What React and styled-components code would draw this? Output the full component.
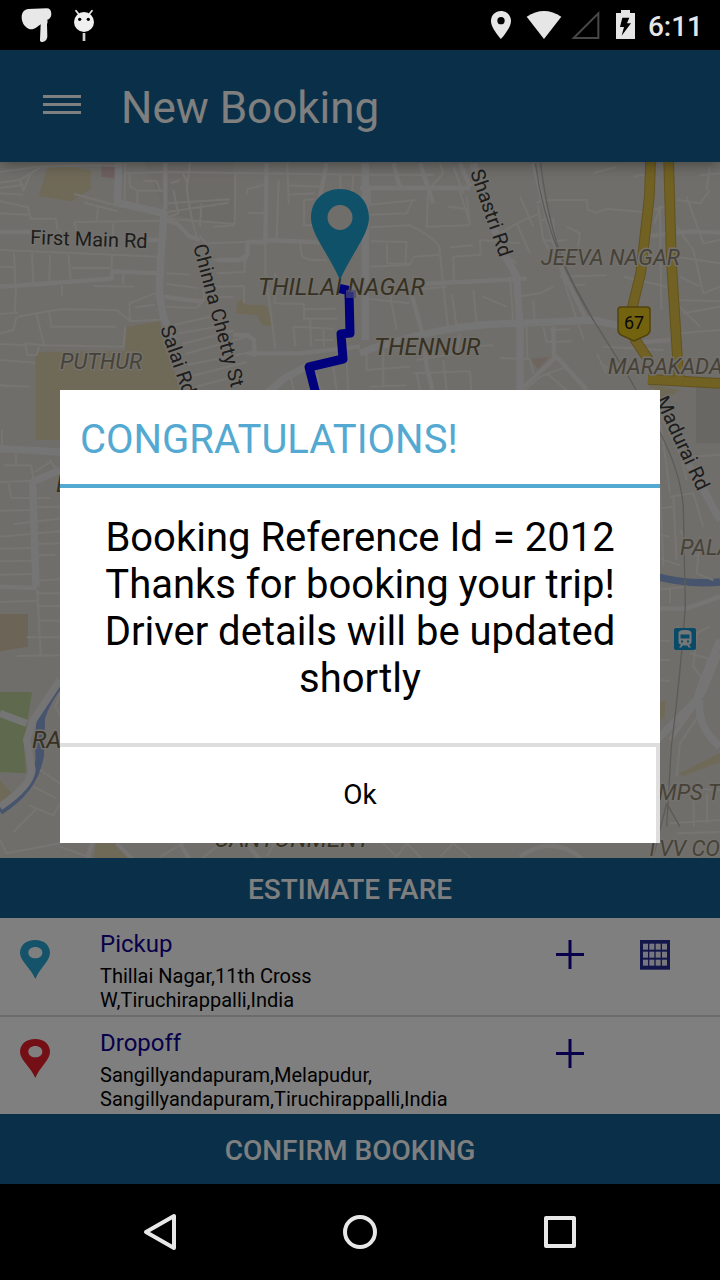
import React from "react";
import styled, { createGlobalStyle } from 'styled-components'

const GlobalStyle = createGlobalStyle`
* {
box-sizing: border-box;
}
body {
margin: 0;
background: #000000;
font-family: Roboto, "Liberation Sans", sans-serif;
}
button {
font-family: inherit;
border: none;
padding: 0;
background: none;
cursor: pointer;
}
svg {
display: block;
}
`

const StyledPhone = styled.div`
display: flex;
flex-direction: column;
min-height: 100vh;
`

const StyledStatusBar = styled.div`
display: flex;
align-items: center;
justify-content: space-between;
height: 50px;
padding: 0 17px 0 20px;
background: #000000;
`

const StyledStatusGroup = styled.div`
display: flex;
align-items: center;
gap: ${props => props.$gap};
`

const StyledClock = styled.time`
padding-top: 4px;
color: #e6e6e6;
font-size: 28px;
font-weight: 500;
line-height: 32px;
`

const StyledScreen = styled.div`
position: relative;
display: flex;
flex: 1;
flex-direction: column;
`

const StyledHeader = styled.header`
position: relative;
z-index: 1;
display: flex;
align-items: center;
gap: 40px;
height: 112px;
padding: 0 43px;
background: #145f91;
box-shadow: 0 2px 14px rgba(0,0,0,0.4);
`

const StyledTitle = styled.h1`
margin: 0;
padding-top: 4px;
color: #ffffff;
font-size: 44px;
font-weight: 400;
line-height: 52px;
`

const StyledMap = styled.section`
position: relative;
flex: 1;
min-height: 400px;
background: #e0dcd4;
overflow: hidden;
`

const StyledMapSvg = styled.svg`
position: absolute;
inset: 0;
width: 100%;
height: 100%;
`

const StyledBarButton = styled.button`
height: ${props => props.$height};
padding: 4px 20px 0 0;
background: #145f91;
color: #ffffff;
font-size: 28px;
font-weight: 500;
line-height: 32px;
`

const StyledRow = styled.div`
display: grid;
grid-template-columns: 80px 1fr 85px 80px;
padding: 12px 0 3px 20px;
background: #ffffff;

& + & {
border-top: 2px solid #d6d6d6;
}
`

const StyledRowIcon = styled.div`
padding-top: 10px;
`

const StyledRowButton = styled.button`
align-self: start;
justify-self: start;
margin-top: 10px;
`

const StyledRowLabel = styled.h2`
margin: 0 0 6px;
color: #0f0096;
font-size: 24px;
font-weight: 400;
line-height: 28px;
`

const StyledAddress = styled.p`
margin: 0;
color: #000000;
font-size: 20px;
line-height: 24px;
`

const StyledScrim = styled.div`
position: absolute;
inset: 0;
z-index: 2;
display: flex;
align-items: center;
justify-content: center;
padding: 0 60px 2px;
background: rgba(0,0,0,0.5);
`

const StyledDialog = styled.div`
display: flex;
flex: 1;
flex-direction: column;
background: #ffffff;
`

const StyledDialogTitle = styled.h2`
margin: 0;
padding: 26px 20px 21px;
border-bottom: 4px solid #53a9d1;
color: #53a9d1;
font-size: 40px;
font-weight: 400;
line-height: 47px;
`

const StyledDialogText = styled.p`
margin: 0;
padding: 26px 20px 41px;
color: #000000;
font-size: 40px;
line-height: 47px;
text-align: center;
`

const StyledOkButton = styled.button`
height: 100px;
padding-left: 4px;
border-top: 4px solid #dedede;
border-right: 4px solid #dedede;
color: #000000;
font-size: 28px;
line-height: 32px;
`

const StyledNav = styled.nav`
display: flex;
height: 96px;
padding: 0 60px;
background: #000000;
`

const StyledNavButton = styled.button`
display: flex;
flex: 1;
align-items: center;
justify-content: center;
`

const StyledLabel = styled.text`
font-family: Roboto, "Liberation Sans", sans-serif;
font-size: ${props => props.$area ? (props.$strong ? '24px' : '22px') : '20px'};
font-style: ${props => props.$area ? 'italic' : 'normal'};
fill: ${props => props.$area ? (props.$strong ? '#6e6244' : '#8f8570') : '#3a3a3a'};
stroke: #e6e2da;
stroke-width: 3px;
stroke-linejoin: round;
paint-order: stroke;
`

const StyledShieldText = styled.text`
font-family: Roboto, "Liberation Sans", sans-serif;
font-size: 18px;
fill: #111111;
text-anchor: middle;
`

// map geometry is kept at three units per pixel
const PARKS = [
    { fill: '#dfd2b0', d: 'M140 30L160 14L272 30L272 86L215 124L116 108Z' },
    { fill: '#dcbfc0', d: 'M304 14L346 14L346 56L304 50Z' },
    { fill: '#dfd2b0', d: 'M380 500L478 484L540 690L540 840L106 840L106 576L376 572Z' },
    { fill: '#dfd2b0', d: 'M712 424L734 420L736 434L800 436L820 500L786 494L770 466L708 460Z' },
    { fill: '#dccabf', d: 'M1590 596L1648 590L1614 628Z' },
    { fill: '#d9c8ae', d: 'M0 1362L84 1362L84 1460L0 1474Z' },
    { fill: '#bcd39a', d: 'M0 1596L96 1596L72 1750L78 1840L0 1836Z' },
    { fill: '#dfd2b0', d: 'M0 1860L44 1910L0 1940Z' },
    { fill: '#dfd2b0', d: 'M2034 1842L2160 1780L2160 1806L2050 1848Z' },
    { fill: '#dfd2b0', d: 'M1950 1640L1996 1620L1994 1672L1960 1700Z' },
    { fill: '#dfd2b0', d: 'M288 2050L350 2050L386 2100L280 2100Z' },
    { fill: '#d1cfc9', d: 'M2088 672L2160 676L2160 850L2088 850Z' },
    { fill: '#dfd2b0', d: 'M1950 672L2040 690L1980 730L1950 690Z' },
    { fill: '#dbd6cf', d: 'M430 0L700 0L705 200L500 160Z' },
]

const MINOR_ROADS = [
    'M0 36L110 20L290 16L350 18',
    'M0 68L60 60L120 22',
    'M0 100L70 104M92 40L70 92L60 60M0 84L70 74',
    'M0 124L84 142L92 176L168 176L172 210M0 160L88 164',
    'M222 102L364 140M252 128L352 154M294 140L290 186',
    'M222 186L484 182M222 186L230 214M340 190L338 270M180 210L184 244',
    'M376 10L374 120M376 40L500 36L1080 44M388 42L390 80L412 92L412 130',
    'M430 62L470 64L480 90M412 92L490 92',
    'M570 10L560 90L576 180L590 230M548 40L562 66M512 70L540 60',
    'M504 130L690 118M504 156L686 128M504 176L704 192L706 44',
    'M604 130L600 200M520 90L535 160L504 172',
    'M640 200L704 196M742 88L790 74M742 88L742 104M742 158L794 160',
    'M862 10L866 130M836 60L830 240M862 76L960 80M862 104L944 100',
    'M912 120L912 196L948 196M912 120L944 118M1020 40L1022 90M1060 46L1056 100',
    'M0 270L340 284L476 290M96 280L100 370M42 280L46 370M150 284L148 368',
    'M206 284L212 358M216 324L330 324M0 320L46 322M336 284L334 360M370 340L370 372',
    'M186 378L186 406M48 380L44 460M280 378L404 380M0 462L54 458',
    'M54 470L110 460L180 448L350 450L392 484L500 478',
    'M148 458L154 500L350 500M110 462L116 490L134 560M390 486L388 430L466 400',
    'M0 520L40 510L50 470M404 442L466 434M376 500L370 560L130 556L76 550L82 586L110 584L118 560',
    'M0 600L106 608M0 552L80 556M0 676L40 680',
    'M640 300L740 300M650 340L734 336M734 300L734 340M600 230L618 250L740 246',
    'M500 340L570 344M500 372L592 384M500 440L590 444L612 420L610 380',
    'M650 380L732 378L732 430M700 410L640 412M536 520L680 496M546 552L700 512',
    'M556 582L740 530M564 614L744 578M576 648L740 606M590 680L700 650M500 500L640 468',
    'M740 250L740 300M796 240L796 340L810 440L826 566M826 340L824 430L912 432',
    'M900 250L906 290L930 300L980 300M912 430L912 476L1012 476M912 448L1010 446',
    'M880 500L886 560M930 478L934 560M880 500L1000 506M970 510L972 560M944 540L1000 540',
    'M880 690L870 640M960 690L950 640M1010 690L1000 620M1040 600L1044 690',
    'M1080 44L1300 44M1108 76L1110 130M1108 134L1250 120M1110 164L1220 160L1236 126',
    'M1110 202L1230 196Q1300 230 1318 260L1334 420L1344 500',
    'M1284 100L1280 200L1410 196M1344 140L1404 148M1320 10L1330 40L1284 90',
    'M1410 196L1400 110M1360 20L1390 100M1450 40L1420 70L1380 96L1410 190',
    'M1112 244L1220 246L1216 310M1160 250L1162 310L1230 312M1110 320L1230 314L1242 290L1320 284',
    'M1130 400L1340 380M1166 380L1190 510M1100 416L1230 430M1350 262L1420 256',
    'M1356 402L1370 500M1420 390L1430 490M1440 240L1560 250M1440 240L1442 284L1360 290L1362 370',
    'M1500 220L1550 190L1620 160M1550 190L1590 280M1470 190L1500 270L1550 310M1560 110L1600 200',
    'M1530 350L1540 490M1550 410L1620 400L1660 380M1600 420L1604 480M1450 410L1520 440',
    'M1610 130Q1614 120 1650 120L1760 120L1764 150L1790 158L1820 146L1930 156',
    'M1614 136L1630 240L1664 244L1700 240M1626 180L1660 176L1664 240M1700 200L1740 220L1734 260',
    'M1630 240L1680 320L1700 390L1752 540M1680 350L1820 346M1700 376L1756 374',
    'M1780 40L1850 20M1900 50L1940 42M1964 190L1980 140L1984 450M1960 150L2020 130',
    'M1870 350L2000 380M2030 120L2100 130L2130 90M2060 110L2110 250L2160 240',
    'M2030 200L2080 270L2110 400L2160 380M2030 290L2160 310M2030 420L2160 424M2040 440L2100 500',
    'M2040 520L2160 510M2050 460L2160 440M2040 350L2100 380M2130 20L2120 90M2160 40L2100 46',
    'M1630 500L1640 546L1716 544M1710 508L1650 510M1580 500L1582 600M1660 500L1662 600',
    'M1500 594L1590 598M1590 598L1600 640M1576 690L1620 650L1700 620L1760 690M1640 640L1700 690',
    'M1100 560L1100 630L1230 620M1150 560L1150 680M1110 680L1220 676M1240 640L1410 634L1414 690',
    'M1250 640L1260 690M1330 600L1340 690M1380 520L1370 580L1250 600M1400 560L1480 556',
    'M1810 560L1990 570M1820 640L1790 580M1800 610L1850 640',
    'M0 676L90 680M6 810L6 860M48 882L48 912M10 916L94 916L100 960M0 966L98 962',
    'M26 970L34 1014L150 1014M104 1042L180 1040M40 1092L180 1076M0 1052L96 1050M0 1130L180 1114',
    'M0 1166L98 1164M0 1204L98 1202M0 1244L98 1242M110 1152L180 1150M110 1186L166 1184',
    'M110 1262L180 1258M0 1326L110 1322M110 1300L180 1300M110 1338L180 1338M112 1290L122 1484M80 1432L180 1432M50 1488L180 1486M118 1382L180 1382',
    'M104 936L150 906M150 900L176 940M180 1600L166 1640L184 1670',
    'M120 1830L180 1870M100 1880L170 1916M86 1936L160 1966L180 1930M40 2016L110 1946',
    'M0 2040L20 2080L180 2050L260 2030M180 2060L290 2100M480 2090L550 2050M600 2100L650 2060',
    'M800 2090L830 2040M1140 2040L1190 2090L1220 2050L1270 2100M1320 2090L1360 2050L1420 2100',
    'M1980 780L2000 920L2010 1000M2010 760L2060 960M2070 890L2160 884M2010 1010L2080 1000L2110 1100',
    'M1980 980L1990 1220M1950 1050L2020 1040M1950 1120L2010 1130M2020 1010L2030 1200M2040 1110L2090 1190M1960 1190L2040 1216',
    'M2100 1130L2090 1240L2140 1260M2010 1280L2010 1330M1970 1290L2060 1280M2030 1400L2070 1430L2130 1400',
    'M2070 1480L2140 1500M1950 1440L2010 1444M1950 1500L2010 1500M1960 1560L2010 1562M2090 1420L2080 1520L2110 1560',
    'M2100 1660L2040 1750L2030 1850M1960 1880L2160 1890M2010 1990L2160 1980M2030 2020L2160 2016M2080 1890L2082 2000M2120 1900L2122 1990',
]

const MEDIUM_ROADS = [
    'M0 216L90 216M430 240L480 240',
    'M0 380L120 372L334 356L338 334L480 340',
    'M496 10L496 150',
    'M494 180L530 190L570 230L600 240',
    'M800 10L796 240L1080 252M980 10L960 110',
    'M650 300L720 300L742 284L744 246L800 246',
    'M490 410L560 420L610 424',
    'M700 524L744 526L762 540L764 590M740 580L900 580L1080 560',
    'M1080 84L1410 84M1180 10L1200 84M1260 10L1300 130M1380 10L1410 80',
    'M1260 372L1580 356M1234 400L1270 530L1280 620L1300 700',
    'M1600 10L1640 170L1690 340L1760 480',
    'M1930 230L2070 214L2160 218M1930 546L2010 540',
    'M1560 690L1670 590L1760 690M1660 500L1662 590',
    'M0 1280L110 1284M1950 1346L2060 1346L2160 1310',
    'M2010 1740L2110 1600L2160 1480',
    'M540 2050L570 2100M740 2050L780 2100M1560 2090Q1660 2020 1750 2100M260 2100L280 2040M350 2050L400 2100',
]

const MAJOR_ROADS = [
    'M356 10L352 128L492 160L482 300L478 400L490 470L520 540',
    'M1096 10L1096 540M800 700L860 650L920 620',
    'M1080 580L1130 560L1240 530Q1400 490 1560 490L1780 480L1870 500',
    'M1420 10L1500 260L1550 350L1560 500L1560 700',
    'M0 866L180 876M180 930L98 966L108 1280',
    'M0 1660L80 1690M180 1560L100 1680L80 1740L96 1830Q90 1880 0 1940',
    'M2100 970L2160 1080M1950 1760L2090 1620L2110 1560L2160 1440M2100 1620Q2090 1700 2160 1760',
    'M1950 690L2100 980',
]

const WATER = [
    'M186 1566Q140 1620 122 1680L118 1800Q100 1890 0 1954',
    'M1950 1244Q2060 1276 2160 1266',
]

const RAILS = [
    'M1606 10Q1640 260 1780 480L1880 640L1960 780Q2040 920 2050 1040L2056 1340Q2040 1560 2014 1760L2000 2000',
    'M1622 10Q1650 240 1720 370L1780 480',
    'M2000 1930L1960 2090M2000 1930L2040 2000',
]

const HIGHWAYS = [
    'M1952 0L1948 110L1922 340L1890 470L1906 540L1946 600',
    'M2006 0L2014 300L2034 620L2040 670',
    'M1944 658L2160 670',
]

const LABELS = [
    { text: 'First Main Rd', x: 30, y: 82, turn: 2 },
    { text: 'Chinna Chetty St', x: 193, y: 84, turn: 75 },
    { text: 'Salai Rd', x: 160, y: 166, turn: 71 },
    { text: 'Shastri Rd', x: 470, y: 10, turn: 71 },
    { text: 'Madurai Rd', x: 655, y: 238, turn: 65 },
    { text: 'PUTHUR', x: 60, y: 207, area: true },
    { text: 'THILLAI NAGAR', x: 258, y: 133, area: true, strong: true },
    { text: 'THENNUR', x: 374, y: 193, area: true, strong: true },
    { text: 'JEEVA NAGAR', x: 541, y: 103, area: true },
    { text: 'MARAKADA', x: 608, y: 212, area: true },
    { text: 'PALA', x: 680, y: 393, area: true },
    { text: 'E', x: 56, y: 330, area: true, strong: true },
    { text: 'RA', x: 32, y: 586, area: true, strong: true },
    { text: 'MPS TO', x: 658, y: 638, area: true },
    { text: 'CANTONMENT', x: 214, y: 685, area: true, strong: true },
    { text: 'TVV CO', x: 646, y: 694, area: true },
]

const PLACES = [
    {
        label: 'Pickup',
        colour: '#28a6d4',
        lines: ['Thillai Nagar,11th Cross', 'W,Tiruchirappalli,India'],
        calendar: true,
    },
    {
        label: 'Dropoff',
        colour: '#e8202a',
        lines: ['Sangillyandapuram,Melapudur,', 'Sangillyandapuram,Tiruchirappalli,India'],
    },
]

function Roads({paths, colour, width}){
    return(
        <g fill="none" stroke={colour} strokeWidth={width} strokeLinejoin="round">
            {paths.map(d => <path key={d} d={d} />)}
        </g>
    )
}

function CityMap(){
    return(
        <StyledMapSvg viewBox="0 0 720 696" preserveAspectRatio="xMidYMid slice" role="img" aria-label="Map of the trip">
            <g transform="translate(0 -2) scale(0.33333)">
                {PARKS.map(park => <path key={park.d} d={park.d} fill={park.fill} />)}
                <Roads paths={WATER} colour="#8fa9dc" width={22} />
                <path d="M112 1660L136 1640L132 1790L110 1850L104 1740Z" fill="#8fa9dc" />
                <Roads paths={MINOR_ROADS} colour="#edeae5" width={6} />
                <Roads paths={MEDIUM_ROADS} colour="#eceae7" width={13} />
                <Roads paths={MAJOR_ROADS} colour="#eceaeb" width={22} />
                <Roads paths={RAILS} colour="#b9b6b1" width={4} />
                <Roads paths={HIGHWAYS} colour="#c4a540" width={32} />
                <Roads paths={HIGHWAYS} colour="#e2c247" width={26} />
            </g>
            {LABELS.map(label => (
                <StyledLabel
                    key={label.text}
                    x={label.x}
                    y={label.y}
                    $area={label.area}
                    $strong={label.strong}
                    transform={label.turn ? `rotate(${label.turn} ${label.x} ${label.y})` : undefined}
                >
                    {label.text}
                </StyledLabel>
            ))}
            <path d="M621 145h26q3 0 3 3v20q0 3-3 5l-13 6l-13-6q-3-2-3-5v-20q0-3 3-3z" fill="#e6c71e" stroke="#a3861f" strokeWidth="1.5" />
            <StyledShieldText x="634" y="167">67</StyledShieldText>
            <rect x="674" y="466" width="22" height="22" rx="2" fill="#0e96d0" />
            <path fillRule="evenodd" fill="#eeeeee" d="M685 468c5 0 6.500 1 6.500 4v7.500c0 2-1 3-2.500 3l2 3h-2.500l-1-2h-5l-1 2h-2.500l2-3c-1.500 0-2.500-1-2.500-3V472c0-3 1.500-4 6.500-4zM680.500 472.500v4h9v-4zM681 478.500v2h2v-2zM687 478.500v2h2v-2z" />
            <path d="M345 123l-2 9M349 130L350 171L341 172L343 197L309 205L318 240L330 280" fill="none" stroke="#0000ff" strokeWidth="9" strokeLinejoin="round" />
            <path d="M346 128h10v8h-10z" fill="#8f8cf0" opacity="0.7" />
            <path fillRule="evenodd" fill="#20a2d4" d="M340 27C323 27 311 39 311 56C311 72 328 91 340 118C352 91 369 72 369 56C369 39 357 27 340 27ZM340 43a12.500 12.500 0 1 1 0 25a12.500 12.500 0 1 1 0-25z" />
        </StyledMapSvg>
    )
}

function PlacePin({colour}){
    return(
        <svg width="30" height="40" viewBox="0 0 90 120" aria-hidden="true">
            <path fill={colour} fillRule="evenodd" d="M46 0C18 0 0 16 0 39C0 62 32 84 46 117C60 84 90 62 90 39C90 16 72 0 46 0ZM46 21c12 0 21 7 21 17s-9 17-21 17s-21-7-21-17s9-17 21-17z" />
        </svg>
    )
}

function CalendarGrid(){
    const cols = [9, 28, 47, 66]
    const rows = [11, 35, 59]
    return(
        <svg width="30" height="30" viewBox="0 0 90 90" aria-hidden="true">
            <rect width="90" height="89" fill="#252c94" />
            {rows.map(y => cols.map(x => <rect key={`${x}-${y}`} x={x} y={y} width="15" height="18" fill="#eeeefa" />))}
        </svg>
    )
}

function StatusBar(){
    return(
        <StyledStatusBar>
            <StyledStatusGroup $gap="21px">
                <svg width="32" height="36" viewBox="60 20 96 108" fill="#e8e8e8">
                    <path d="M84 26L140 24Q153 24 154 40Q154 54 142 58Q144 64 141 72L142 108Q142 122 128 125Q119 125 120 118L122 72Q108 84 98 87Q84 88 74 76Q64 64 65 46Q68 28 84 26Z" />
                </svg>
                <svg width="22" height="33" viewBox="219 27 66 99">
                    <circle cx="252" cy="66" r="30" fill="#f0f0f0" />
                    <path d="M228 32L236 42M276 32L268 42" stroke="#f0f0f0" strokeWidth="5" strokeLinecap="round" />
                    <path d="M252 99V123" stroke="#d5d5d5" strokeWidth="8" />
                    <circle cx="239" cy="58" r="5" />
                    <circle cx="265" cy="58" r="5" />
                </svg>
            </StyledStatusGroup>
            <StyledStatusGroup $gap="8px">
                <svg width="26" height="30" viewBox="384 30 78 90" fill="#e6e6e6">
                    <path fillRule="evenodd" d="M423 33C406 33 393 46 393 63C393 85 423 117 423 117S453 85 453 63C453 46 440 33 423 33ZM423 51a11 11 0 1 1 0 22a11 11 0 1 1 0-22z" />
                </svg>
                <svg width="40" height="30" viewBox="486 30 120 90" fill="#e6e6e6">
                    <path d="M500 50Q552 16 604 50L552 117Z" />
                </svg>
                <svg width="32" height="30" viewBox="630 30 96 90" fill="none" stroke="#484848" strokeWidth="6">
                    <path d="M641 114L715 40V114Z" />
                </svg>
                <svg width="30" height="30" viewBox="750 30 90 90">
                    <path fill="#e6e6e6" d="M768 39H783V30H810V39H825V117H768Z" />
                    <path fill="#000000" d="M787 53H808L801 70H813L785 107L792 81H780Z" />
                </svg>
                <StyledClock>6:11</StyledClock>
            </StyledStatusGroup>
        </StyledStatusBar>
    )
}

function PlaceRow({place}){
    return(
        <StyledRow>
            <StyledRowIcon>
                <PlacePin colour={place.colour} />
            </StyledRowIcon>
            <div>
                <StyledRowLabel>{place.label}</StyledRowLabel>
                <StyledAddress>{place.lines[0]}<br />{place.lines[1]}</StyledAddress>
            </div>
            <StyledRowButton type="button" aria-label={`Add ${place.label}`}>
                <svg width="30" height="30" viewBox="0 0 30 30" stroke="#0f0096" strokeWidth="3">
                    <path d="M1 14.500H29M15 0V29" />
                </svg>
            </StyledRowButton>
            {place.calendar && (
                <StyledRowButton type="button" aria-label="Pick a date">
                    <CalendarGrid />
                </StyledRowButton>
            )}
        </StyledRow>
    )
}

export default function App(){
    return(
        <StyledPhone>
            <GlobalStyle />
            <StatusBar />
            <StyledScreen>
                <StyledHeader>
                    <button type="button" aria-label="Menu">
                        <svg width="38" height="24" viewBox="0 0 38 24" stroke="#ffffff" strokeWidth="3">
                            <path d="M0 2.500H38M0 10.500H38M0 18.500H38" />
                        </svg>
                    </button>
                    <StyledTitle>New Booking</StyledTitle>
                </StyledHeader>
                <StyledMap>
                    <CityMap />
                </StyledMap>
                <StyledBarButton type="button" $height="60px">ESTIMATE FARE</StyledBarButton>
                {PLACES.map(place => <PlaceRow key={place.label} place={place} />)}
                <StyledBarButton type="button" $height="70px">CONFIRM BOOKING</StyledBarButton>
                <StyledScrim>
                    <StyledDialog role="dialog" aria-labelledby="dialog-title">
                        <StyledDialogTitle id="dialog-title">CONGRATULATIONS!</StyledDialogTitle>
                        <StyledDialogText>
                            Booking Reference Id = 2012<br />
                            Thanks for booking your trip! Driver details will be updated shortly
                        </StyledDialogText>
                        <StyledOkButton type="button">Ok</StyledOkButton>
                    </StyledDialog>
                </StyledScrim>
            </StyledScreen>
            <StyledNav>
                <StyledNavButton type="button" aria-label="Back">
                    <svg width="36" height="40" viewBox="0 0 36 40" fill="none" stroke="#e8e8e8" strokeWidth="4" strokeLinejoin="round">
                        <path d="M32 4V36L4 20Z" />
                    </svg>
                </StyledNavButton>
                <StyledNavButton type="button" aria-label="Home">
                    <svg width="36" height="36" viewBox="0 0 36 36" fill="none" stroke="#e8e8e8" strokeWidth="4">
                        <circle cx="18" cy="18" r="15" />
                    </svg>
                </StyledNavButton>
                <StyledNavButton type="button" aria-label="Recent apps">
                    <svg width="32" height="32" viewBox="0 0 32 32" fill="none" stroke="#e8e8e8" strokeWidth="4" strokeLinejoin="round">
                        <rect x="2" y="2" width="28" height="28" />
                    </svg>
                </StyledNavButton>
            </StyledNav>
        </StyledPhone>
    )
}
